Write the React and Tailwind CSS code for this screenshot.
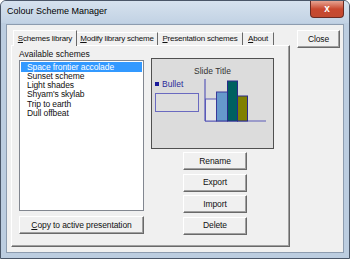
const font = { fontFamily: '"Liberation Sans", "DejaVu Sans", sans-serif' };

function Btn({ children, className = '' }) {
  return (
    <div
      className={`flex items-center justify-center whitespace-nowrap bg-[#f0f0f0] border-t border-l border-t-white border-l-white border-r border-b border-r-[#696969] border-b-[#696969] shadow-[inset_-1px_-1px_0_#a0a0a0] text-[8.5px] tracking-[-0.1px] text-[#111] ${className}`}
    >
      {children}
    </div>
  );
}

function Tab({ children, active, className = '' }) {
  return (
    <div
      className={`flex items-center justify-center whitespace-nowrap text-[8px] tracking-[-0.2px] text-[#111] border-r border-r-[#696969] ${
        active
          ? 'h-[16px] bg-[#f0f0f0] border-l border-t border-l-white border-t-white -mb-px z-10 relative'
          : 'h-[13px] border-t border-t-white'
      } ${className}`}
    >
      {children}
    </div>
  );
}

const schemes = ['Sunset scheme', 'Light shades', "Shyam's skylab", 'Trip to earth', 'Dull offbeat'];

export default function App() {
  return (
    <div className="w-[350px] h-[259px] bg-[#bccde0] border border-[#4a5668] rounded-t-[6px] overflow-hidden relative" style={font}>
      {/* title bar */}
      <div className="h-[22px] flex items-center pl-[6px] bg-gradient-to-b from-[#d6e2ee] to-[#c2d2e4]">
        <span className="text-[9px] text-black">Colour Scheme Manager</span>
      </div>
      <div className="absolute right-[5px] top-0 w-[34px] h-[17px] rounded-b-[4px] border border-[#6b2a22] border-t-0 bg-gradient-to-b from-[#e6a291] via-[#c9482f] to-[#c24a30] flex items-center justify-center">
        <span className="text-white text-[10px] font-bold leading-none">x</span>
      </div>

      {/* client */}
      <div className="mx-[5px] mt-[1px] h-[229px] bg-[#f0f0f0] border border-[#8d9caf] flex pl-[4px] pt-[4px]">
        {/* tab control */}
        <div className="w-[279px] flex flex-col">
          <div className="flex items-end pl-[2px] h-[16px]">
            <Tab active className="w-[64px]"><span><u>S</u>chemes library</span></Tab>
            <Tab className="w-[81px]"><span><u>M</u>odify library scheme</span></Tab>
            <Tab className="w-[85px]"><span><u>P</u>resentation schemes</span></Tab>
            <Tab className="w-[31px]"><span><u>A</u>bout</span></Tab>
          </div>
          <div className="h-[202px] border-t border-l border-t-white border-l-white border-r border-b border-r-[#696969] border-b-[#696969] shadow-[inset_-1px_-1px_0_#a0a0a0] flex pl-[7px] pt-[3px] gap-[7px]">
            <div className="w-[125px] flex flex-col">
              <div className="text-[8.5px] text-[#111] h-[11px] leading-[11px] whitespace-nowrap">Available schemes</div>
              <div className="h-[151px] bg-white border border-[#828790] pt-[1px] px-[1px] text-[8.5px] tracking-[-0.1px] leading-[9.3px] text-[#111] whitespace-nowrap">
                <div className="bg-[#3399ff] text-white pl-[6px] h-[10px] leading-[10px]">Space frontier accolade</div>
                {schemes.map((s) => (
                  <div key={s} className="pl-[6px] h-[9.2px]">{s}</div>
                ))}
              </div>
              <Btn className="mt-[5px] h-[18px]"><span><u>C</u>opy to active presentation</span></Btn>
            </div>
            <div className="flex flex-col items-start pt-[9px]">
              <div className="w-[123px] h-[91px] bg-[#dcdcdc] border border-[#505050] flex flex-col px-[3px]">
                <div className="text-center text-[8.5px] text-[#333] mt-[7px] leading-[10px]">Slide Title</div>
                <div className="flex mt-[3px]">
                  <div className="w-[44px] flex flex-col">
                    <div className="flex items-center gap-[3px] text-[8.5px] text-[#2a2a9a] leading-[10px]">
                      <span className="w-[4px] h-[4px] bg-[#1a1a9a]" />
                      Bullet
                    </div>
                    <div className="mt-[4px] w-[44px] h-[19px] border border-[#6a6ac0] bg-[#dedede]" />
                  </div>
                  <svg width="66" height="46" className="ml-[5px] mt-[-2px]">
                    <line x1="1" y1="2" x2="1" y2="44" stroke="#5a5ab8" strokeWidth="1.2" />
                    <line x1="1" y1="44" x2="62" y2="44" stroke="#5a5ab8" strokeWidth="1.2" />
                    <rect x="1.5" y="22" width="11" height="22" fill="#e8e8e8" stroke="#5a5ab8" />
                    <rect x="12.5" y="15" width="11" height="29" fill="#6699cc" stroke="#3a3a9a" />
                    <rect x="23.5" y="4" width="10" height="40" fill="#006060" stroke="#2a2a8a" />
                    <rect x="33.5" y="19" width="10" height="25" fill="#808000" stroke="#2a2a8a" />
                  </svg>
                </div>
              </div>
              <div className="flex flex-col gap-[3.5px] mt-[3px] ml-[32px]">
                <Btn className="w-[64px] h-[18px]">Rename</Btn>
                <Btn className="w-[64px] h-[18px]">Export</Btn>
                <Btn className="w-[64px] h-[18px]">Import</Btn>
                <Btn className="w-[64px] h-[18px]">Delete</Btn>
              </div>
            </div>
          </div>
        </div>
        <div className="ml-[7px] pt-[1px]">
          <Btn className="w-[43px] h-[18px]">Close</Btn>
        </div>
      </div>
    </div>
  );
}
